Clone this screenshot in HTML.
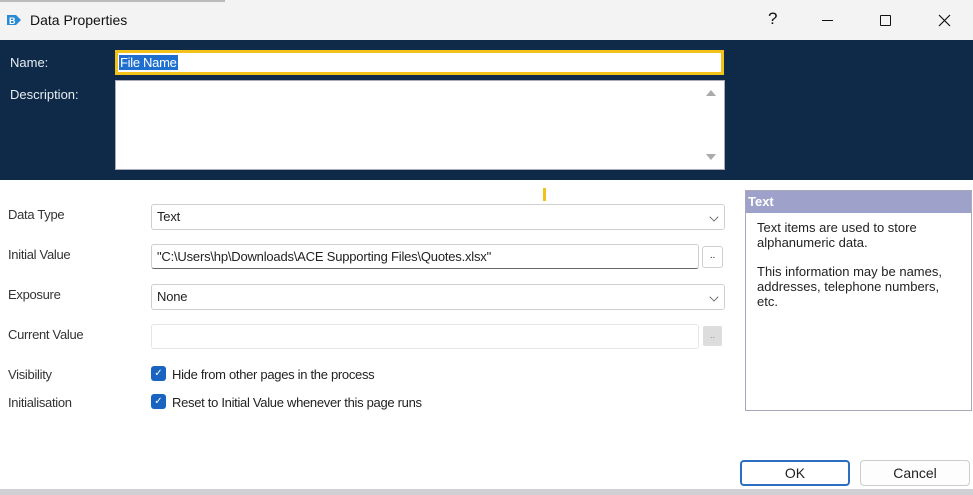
<!DOCTYPE html>
<html><head><style>
*{margin:0;padding:0;box-sizing:border-box}
body{width:973px;height:495px;overflow:hidden;background:#fff;font-family:"Liberation Sans",sans-serif;font-size:13px;color:#222;position:relative}
.a{position:absolute}
.lbl{position:absolute;left:8px;font-size:13px;color:#333;letter-spacing:-0.3px}
.box{position:absolute;background:#fff;border:1px solid #cfcfcf;border-radius:3px;padding-left:5px;line-height:24px;font-size:13px;color:#222;letter-spacing:-0.2px}
.chev{position:absolute;right:6px;top:8px;width:8px;height:8px;border-right:1px solid #555;border-bottom:1px solid #555;transform:rotate(45deg) scale(.8)}
.cb{position:absolute;left:151px;width:15px;height:15px;background:#1864c0;border-radius:3px;color:#fff;font-size:10px;text-align:center;line-height:15px}
</style></head><body>
<div class="a" style="left:0;top:0;width:973px;height:40px;background:#f3f3f3"></div>
<div class="a" style="left:0;top:0;width:225px;height:2px;background:#bbb"></div>
<svg class="a" style="left:6px;top:13px" width="16" height="14"><path d="M1 2 L10 2 L15 7 L10 12 L1 12 Z" fill="#2a8ad6"/><text x="3" y="11" font-size="9" fill="#fff" font-family="Liberation Sans" font-weight="bold">B</text></svg>
<div class="a" style="left:30px;top:12px;font-size:14px;color:#111">Data Properties</div>
<div class="a" style="left:768px;top:9px;font-size:17px;color:#111">?</div>
<div class="a" style="left:822px;top:20px;width:11px;height:1px;background:#111"></div>
<div class="a" style="left:880px;top:15px;width:11px;height:11px;border:1px solid #111;border-radius:1px"></div>
<svg class="a" style="left:938px;top:14px" width="13" height="13"><path d="M1 1L12 12M12 1L1 12" stroke="#111" stroke-width="1.2"/></svg>
<div class="a" style="left:0;top:40px;width:973px;height:140px;background:#0e2a48"></div>
<div class="a" style="left:10px;top:55px;color:#e8edf2;font-size:13px">Name:</div>
<div class="a" style="left:10px;top:87px;color:#e8edf2;font-size:13px">Description:</div>
<div class="a" style="left:115px;top:50px;width:609px;height:25px;background:#fff;border:3px solid #f2c21b"></div>
<div class="a" style="left:119px;top:55px;background:#1e6fd0;color:#fff;font-size:13px;line-height:15px;padding:0 1px;letter-spacing:-0.3px">File Name</div>
<div class="a" style="left:115px;top:80px;width:610px;height:90px;background:#fff;border:1px solid #aab"></div>
<div class="a" style="left:706px;top:90px;border:5px solid transparent;border-bottom:6px solid #aaa;border-top:none"></div>
<div class="a" style="left:706px;top:154px;border:5px solid transparent;border-top:6px solid #aaa;border-bottom:none"></div>
<div class="a" style="left:543px;top:188px;width:3px;height:13px;background:#f2c21b"></div>
<div class="lbl" style="top:207px">Data Type</div>
<div class="box" style="left:151px;top:204px;width:574px;height:26px">Text<div class="chev"></div></div>
<div class="lbl" style="top:247px">Initial Value</div>
<div class="box" style="left:151px;top:244px;width:548px;height:25px;border-bottom:1px solid #666">"C:\Users\hp\Downloads\ACE Supporting Files\Quotes.xlsx"</div>
<div class="box" style="left:702px;top:246px;width:21px;height:22px;line-height:18px;text-align:center;padding:0;font-size:10px">..</div>
<div class="lbl" style="top:287px">Exposure</div>
<div class="box" style="left:151px;top:284px;width:574px;height:26px">None<div class="chev"></div></div>
<div class="lbl" style="top:327px">Current Value</div>
<div class="box" style="left:151px;top:324px;width:548px;height:25px;border-color:#e6e6e6"></div>
<div class="a" style="left:703px;top:326px;width:19px;height:20px;background:#ddd;border-radius:2px;font-size:9px;color:#888;text-align:center;line-height:18px">..</div>
<div class="lbl" style="top:367px">Visibility</div>
<div class="cb" style="top:366px">✓</div>
<div class="a" style="left:172px;top:367px;letter-spacing:-0.3px">Hide from other pages in the process</div>
<div class="lbl" style="top:395px">Initialisation</div>
<div class="cb" style="top:394px">✓</div>
<div class="a" style="left:172px;top:395px;letter-spacing:-0.3px">Reset to Initial Value whenever this page runs</div>
<div class="a" style="left:745px;top:190px;width:227px;height:221px;border:1px solid #a8a8b8"></div>
<div class="a" style="left:746px;top:191px;width:225px;height:22px;background:#9ea2cb;color:#fff;font-weight:bold;font-size:13px;padding-left:2px;line-height:22px">Text</div>
<div class="a" style="left:757px;top:220px;width:200px;font-size:13px;line-height:15px;color:#222">Text items are used to store alphanumeric data.<br><div style="height:14px"></div>This information may be names, addresses, telephone numbers, etc.</div>
<div class="a" style="left:740px;top:460px;width:110px;height:26px;border:2px solid #2c6fc0;border-radius:4px;text-align:center;line-height:22px;font-size:14px">OK</div>
<div class="a" style="left:860px;top:460px;width:110px;height:26px;border:1px solid #ccc;border-radius:4px;text-align:center;line-height:24px;font-size:14px;background:#fdfdfd">Cancel</div>
<div class="a" style="left:0;top:489px;width:973px;height:6px;background:#d0d0d4"></div>
</body></html>
